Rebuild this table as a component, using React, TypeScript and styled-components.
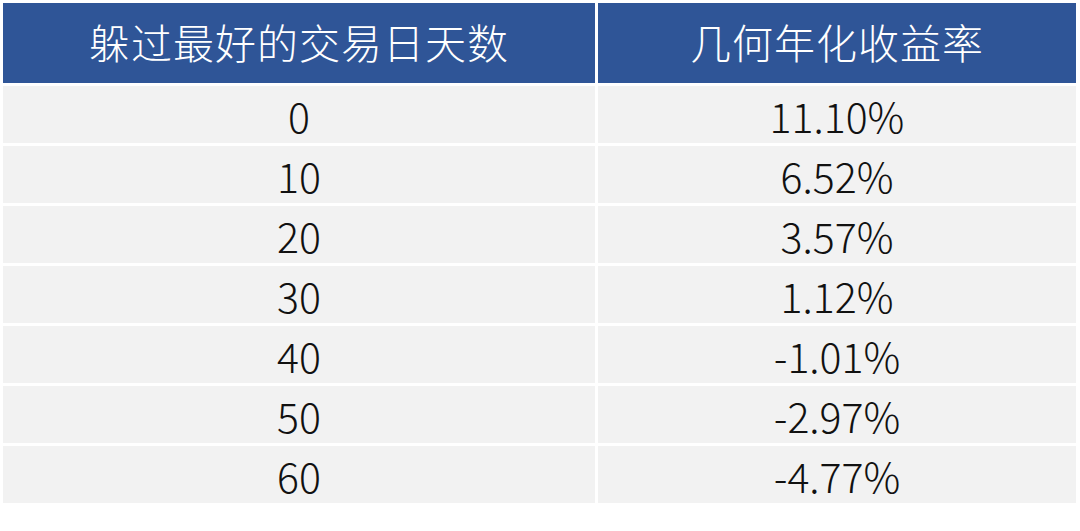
import React from 'react'
import styled, { createGlobalStyle } from 'styled-components'

const GlobalStyle = createGlobalStyle`
  html, body {
    margin: 0;
    padding: 0;
    background: #ffffff;
  }
  body {
    font-family: "Noto Sans CJK SC", "Noto Sans", sans-serif;
  }
`

const Page = styled.div`
  width: 1080px;
  height: 531px;
  padding: 3px 4px 0 3px;
  box-sizing: border-box;
  background: #ffffff;
`

const Table = styled.div`
  display: grid;
  grid-template-columns: 592px 478px;
  grid-auto-rows: 57px;
  grid-template-rows: 80px;
  column-gap: 3px;
  row-gap: 3px;
`

const HeadCell = styled.div`
  background: #2f5597;
  color: #ffffff;
  font-size: 41px;
  font-weight: 300;
  letter-spacing: 1px;
  display: flex;
  align-items: center;
  justify-content: center;
  padding-bottom: 4px;
  box-sizing: border-box;
`

const Cell = styled.div`
  background: #f2f2f2;
  color: #111111;
  font-size: 41px;
  font-weight: 300;
  display: flex;
  align-items: center;
  justify-content: center;
  padding-top: 1px;
  box-sizing: border-box;
`

const rows: [string, string][] = [
  ['0', '11.10%'],
  ['10', '6.52%'],
  ['20', '3.57%'],
  ['30', '1.12%'],
  ['40', '-1.01%'],
  ['50', '-2.97%'],
  ['60', '-4.77%'],
]

export default function App() {
  return (
    <>
      <GlobalStyle />
      <Page>
        <Table>
          <HeadCell>躲过最好的交易日天数</HeadCell>
          <HeadCell>几何年化收益率</HeadCell>
          {rows.map(([days, ret]) => (
            <React.Fragment key={days}>
              <Cell>{days}</Cell>
              <Cell>{ret}</Cell>
            </React.Fragment>
          ))}
        </Table>
      </Page>
    </>
  )
}
